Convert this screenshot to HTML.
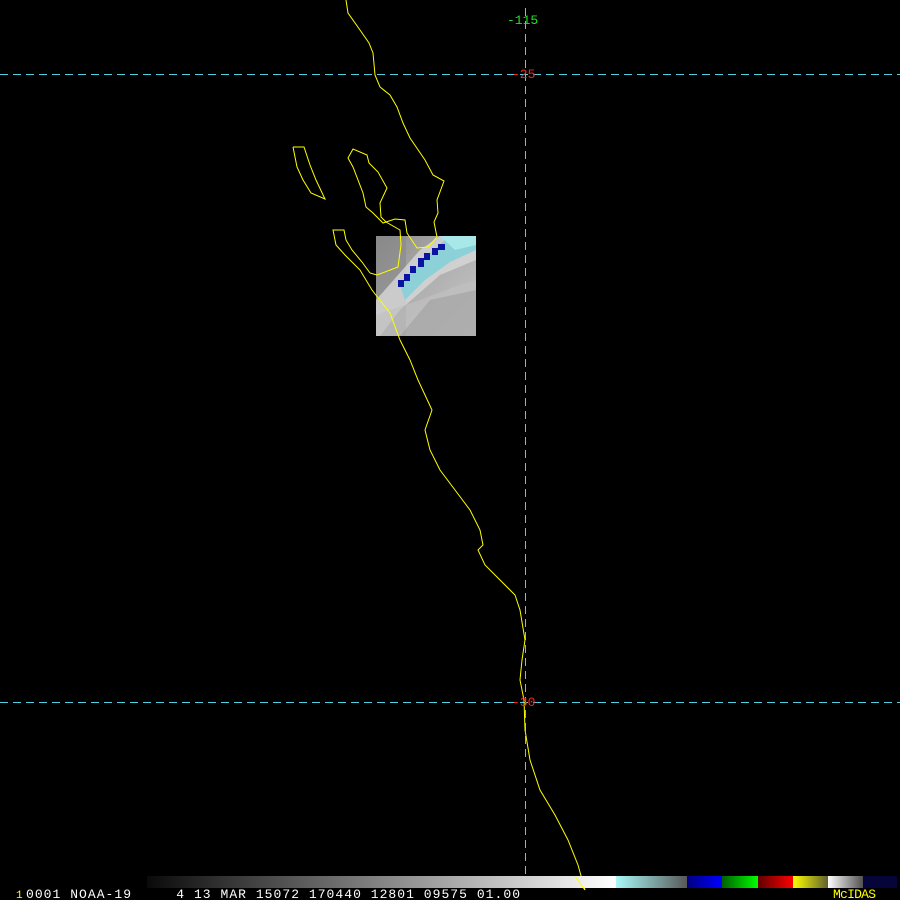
<!DOCTYPE html>
<html><head><style>
html,body{margin:0;padding:0;background:#000;width:900px;height:900px;overflow:hidden}
</style></head><body>
<svg width="900" height="900" viewBox="0 0 900 900" xmlns="http://www.w3.org/2000/svg" style="display:block">
<defs>
<linearGradient id="gbar" x1="0" x2="1" y1="0" y2="0">
<stop offset="0" stop-color="#0a0a0a"/><stop offset="1" stop-color="#ffffff"/>
</linearGradient>
<linearGradient id="cbar" x1="0" x2="1"><stop offset="0" stop-color="#a8f8f8"/><stop offset="1" stop-color="#585858"/></linearGradient>
<linearGradient id="bbar" x1="0" x2="1"><stop offset="0" stop-color="#000080"/><stop offset="1" stop-color="#0000ff"/></linearGradient>
<linearGradient id="grbar" x1="0" x2="1"><stop offset="0" stop-color="#006000"/><stop offset="1" stop-color="#00ff00"/></linearGradient>
<linearGradient id="rbar" x1="0" x2="1"><stop offset="0" stop-color="#600000"/><stop offset="1" stop-color="#ff0000"/></linearGradient>
<linearGradient id="ybar" x1="0" x2="1"><stop offset="0" stop-color="#ffff00"/><stop offset="1" stop-color="#606030"/></linearGradient>
<linearGradient id="wbar" x1="0" x2="1"><stop offset="0" stop-color="#ffffff"/><stop offset="1" stop-color="#505050"/></linearGradient>
<linearGradient id="patch" x1="0" y1="0" x2="1" y2="1">
<stop offset="0" stop-color="#8a8a8a"/><stop offset="0.5" stop-color="#b0b0b0"/><stop offset="1" stop-color="#c8c8c8"/>
</linearGradient>
</defs>
<rect x="376" y="236" width="100" height="100" fill="url(#patch)"/>
<rect x="376" y="236" width="30" height="100" fill="#888" opacity="0.6"/>
<polygon points="376,300 420,250 440,236 476,236 476,260 440,275 400,310 380,336 376,336" fill="#d8d8d8" opacity="0.8"/>
<polygon points="400,285 425,258 445,240 476,236 476,250 450,262 425,280 405,300" fill="#8cd0d8"/>
<polygon points="440,236 476,236 476,245 455,250" fill="#a8e8e8"/>
<polygon points="376,336 376,315 420,300 460,285 476,280 476,336" fill="#c0c0c0" opacity="0.7"/>
<polygon points="400,336 430,300 476,290 476,336" fill="#9a9a9a" opacity="0.5"/>
<g fill="#0a14a0">
<rect x="398" y="280" width="6" height="7"/><rect x="404" y="274" width="6" height="7"/>
<rect x="410" y="266" width="6" height="7"/><rect x="418" y="258" width="6" height="9"/>
<rect x="424" y="253" width="6" height="7"/><rect x="432" y="248" width="6" height="7"/>
<rect x="438" y="244" width="7" height="6"/>
</g>
<g stroke="#50d0e0" stroke-width="1" stroke-dasharray="8,5" fill="none">
<line x1="0" y1="74.5" x2="900" y2="74.5"/>
<line x1="0" y1="702.5" x2="900" y2="702.5"/>
<line x1="525.5" y1="8" x2="525.5" y2="876"/>
</g>
<g stroke="#ffff00" stroke-width="1" fill="none">
<polyline points="346,0 348,13 360,30 369,43 373,53 375,75 380,87 390,95 397,107 403,123 410,138 425,160 433,175 444,181 437,200 438,213 434,222 437,237 428,247 417,248 407,233 405,220 395,219 383,223 373,213 366,207 363,193 353,167 348,158 353,149 367,155 369,163 378,172 387,188 380,203 381,217 386,222 400,230 401,245 398,267 377,275 370,273"/>
<polyline points="293,147 304,147 310,165 316,180 325,199 311,193 303,180 297,167 293,147"/>
<polyline points="370,273 362,262 352,250 346,240 344,230 333,230 336,245 345,255 360,270 372,290 390,313 400,340 410,360 418,380 425,395 432,410 425,430 430,450 440,470 455,490 470,510 480,530 483,545 478,550 485,565 500,580 515,595 520,610 525,640 522,660 520,680 524,700 525,730 530,760 540,790 555,815 568,840 578,865 585,890"/>
</g>
<g font-family="Liberation Mono, monospace" font-size="13">
<text x="507" y="24" fill="#20e020">-115</text>
<text x="512" y="78" fill="#ff2020">-25</text>
<text x="512" y="706" fill="#ff2020">-30</text>
</g>
<rect x="147" y="876" width="469" height="12" fill="url(#gbar)"/>
<rect x="616" y="876" width="71" height="12" fill="url(#cbar)"/>
<rect x="687" y="876" width="35" height="12" fill="url(#bbar)"/>
<rect x="722" y="876" width="36" height="12" fill="url(#grbar)"/>
<rect x="758" y="876" width="35" height="12" fill="url(#rbar)"/>
<rect x="793" y="876" width="35" height="12" fill="url(#ybar)"/>
<rect x="828" y="876" width="35" height="12" fill="url(#wbar)"/>
<rect x="863" y="876" width="34" height="12" fill="#05053a"/>
<line x1="575" y1="876" x2="585" y2="890" stroke="#ffff00"/>
<g font-family="Liberation Mono, monospace" font-size="13">
<text x="16" y="898" fill="#ffff00" font-size="11">1</text>
<text x="26" y="898" fill="#ffffff" xml:space="preserve" textLength="494" lengthAdjust="spacing">0001 NOAA-19     4 13 MAR 15072 170440 12801 09575 01.00</text>
<text x="833" y="898" fill="#ffff00" textLength="43" lengthAdjust="spacing">McIDAS</text>
</g>
</svg>
</body></html>
